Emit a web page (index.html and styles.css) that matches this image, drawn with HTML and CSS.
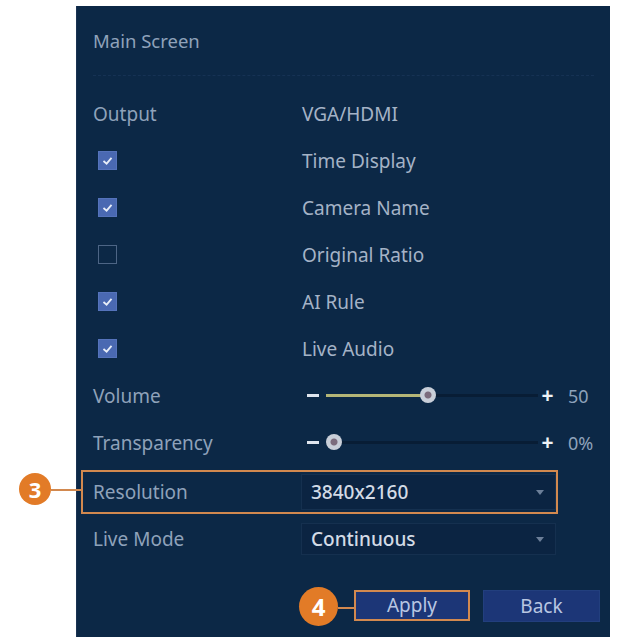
FILE: index.html
```html
<!DOCTYPE html>
<html lang="en">
<head>
    <meta charset="UTF-8">
    <meta name="viewport" content="width=device-width, initial-scale=1.0">
    <title>Main Screen - Display Settings</title>
    <link rel="stylesheet" href="styles.css">
</head>
<body>

    <!-- Display settings panel -->
    <div class="panel">
        <div class="title">Main Screen</div>
        <div class="divider"></div>

        <div class="rows">
            <div class="row">
                <span class="label">Output</span>
                <span class="value">VGA/HDMI</span>
            </div>

            <div class="row">
                <span class="label"><span class="check on"><svg viewBox="0 0 19 19"><polyline points="5,10 8.5,13 14,6.5"/></svg></span></span>
                <span class="value">Time Display</span>
            </div>

            <div class="row">
                <span class="label"><span class="check on"><svg viewBox="0 0 19 19"><polyline points="5,10 8.5,13 14,6.5"/></svg></span></span>
                <span class="value">Camera Name</span>
            </div>

            <div class="row">
                <span class="label"><span class="check"></span></span>
                <span class="value">Original Ratio</span>
            </div>

            <div class="row">
                <span class="label"><span class="check on"><svg viewBox="0 0 19 19"><polyline points="5,10 8.5,13 14,6.5"/></svg></span></span>
                <span class="value">AI Rule</span>
            </div>

            <div class="row">
                <span class="label"><span class="check on"><svg viewBox="0 0 19 19"><polyline points="5,10 8.5,13 14,6.5"/></svg></span></span>
                <span class="value">Live Audio</span>
            </div>

            <div class="row">
                <span class="label">Volume</span>
                <div class="slider">
                    <span class="minus"></span>
                    <div class="track">
                        <div class="fill" style="width: 48%"></div>
                        <span class="knob" style="left: 48%"></span>
                    </div>
                    <span class="plus">+</span>
                    <span class="amount">50</span>
                </div>
            </div>

            <div class="row">
                <span class="label">Transparency</span>
                <div class="slider">
                    <span class="minus"></span>
                    <div class="track">
                        <div class="fill" style="width: 0%"></div>
                        <span class="knob" style="left: 4%"></span>
                    </div>
                    <span class="plus">+</span>
                    <span class="amount">0%</span>
                </div>
            </div>

            <div class="row highlight">
                <span class="callout callout-3">3</span>
                <span class="label">Resolution</span>
                <div class="select tall">3840x2160<span class="arrow"></span></div>
            </div>

            <div class="row">
                <span class="label">Live Mode</span>
                <div class="select">Continuous<span class="arrow"></span></div>
            </div>
        </div>

        <div class="actions">
            <button class="btn apply">
                <span class="callout callout-4">4</span>
                Apply
            </button>
            <button class="btn">Back</button>
        </div>
    </div>

</body>
</html>
```

FILE: styles.css
```css
body {
    margin: 0;
    background: #fff;
    font-family: 'Noto Sans', 'Open Sans', sans-serif;
    height: 637px;
    overflow: hidden;
}

.panel {
    margin: 6px 0 0 76px;
    width: 534px;
    height: 631px;
    box-sizing: border-box;
    padding: 18px 10px 0 16px;
    background: #0c2846;
    border-left: 1px solid #1b3352;
    color: #8fa2ba;
}

.title {
    height: 34px;
    line-height: 34px;
    font-size: 18.5px;
}

.divider {
    margin: 17px 6px 14px 0;
    border-top: 1px dashed #163254;
}

/* Settings rows */
.row {
    display: grid;
    grid-template-columns: 208px 255px;
    align-items: center;
    height: 47px;
    font-size: 19px;
    position: relative;
}

.value {
    color: #a5b3c6;
    padding-left: 1px;
}

.check {
    display: block;
    width: 19px;
    height: 19px;
    margin-left: 5px;
    box-sizing: border-box;
    border: 1px solid #4d6585;
}

.check.on {
    background: #4a69b2;
    border-color: #5573bb;
}

.check svg {
    display: block;
    width: 17px;
    height: 17px;
}

.check polyline {
    fill: none;
    stroke: #e8eef8;
    stroke-width: 2;
}

/* Sliders */
.slider {
    display: flex;
    align-items: center;
    width: 300px;
    padding-left: 6px;
}

.minus {
    width: 12px;
    height: 3px;
    background: #dfe5ee;
}

.track {
    position: relative;
    width: 212px;
    height: 3px;
    margin: 0 3px 0 7px;
    background: #081d35;
}

.fill {
    height: 3px;
    background: #b5b677;
}

.knob {
    position: absolute;
    top: -7px;
    width: 16px;
    height: 16px;
    margin-left: -8px;
    border-radius: 50%;
    background: radial-gradient(circle, #7c6c7d 0 3px, #c9cfd9 4px);
}

.plus {
    width: 13px;
    color: #eef2f7;
    font-weight: 700;
    font-size: 21px;
    line-height: 1;
    text-align: center;
}

.amount {
    margin-left: 14px;
    color: #8ea2bb;
    font-size: 18px;
}

/* Select boxes */
.select {
    position: relative;
    height: 32px;
    line-height: 31px;
    padding-left: 9px;
    box-sizing: border-box;
    background: #0b2442;
    border: 1px solid #15304f;
    color: #d3dbe6;
    font-weight: 500;
}

.select.tall {
    height: 36px;
    line-height: 34px;
}

.arrow {
    position: absolute;
    right: 11px;
    top: 50%;
    margin-top: -2px;
    border-left: 4px solid transparent;
    border-right: 4px solid transparent;
    border-top: 5px solid #6c7f99;
}

.highlight {
    justify-self: start;
    height: 40px;
    margin: 4px 0 1px -12px;
    padding-left: 10px;
    border: 2px solid #d2894f;
    grid-template-columns: 208px 255px;
}

/* Numbered callouts */
.callout {
    position: absolute;
    display: flex;
    align-items: center;
    justify-content: center;
    border-radius: 50%;
    background: #e27b27;
    color: #fff;
    font-weight: 700;
    font-family: 'Open Sans', sans-serif;
}

.callout::after {
    content: '';
    position: absolute;
    top: 50%;
    left: 100%;
    height: 2px;
    background: #d2894f;
}

.callout-3 {
    left: -64px;
    top: 1px;
    width: 32px;
    height: 32px;
    font-size: 22px;
}

.callout-3::after {
    width: 30px;
}

.callout-4 {
    left: -57px;
    top: -5px;
    width: 39px;
    height: 39px;
    font-size: 24px;
}

.callout-4::after {
    width: 17px;
}

/* Buttons */
.actions {
    display: flex;
    justify-content: flex-end;
    gap: 13px;
    margin-top: 28px;
}

.btn {
    position: relative;
    width: 117px;
    height: 32px;
    border: 1px solid #223f7e;
    background: #1c3677;
    color: #b8c6e2;
    font-family: inherit;
    font-size: 19px;
    line-height: 1;
    cursor: pointer;
}

.btn.apply {
    width: 116px;
    height: 31px;
    border: 2px solid #d2894f;
}
```
